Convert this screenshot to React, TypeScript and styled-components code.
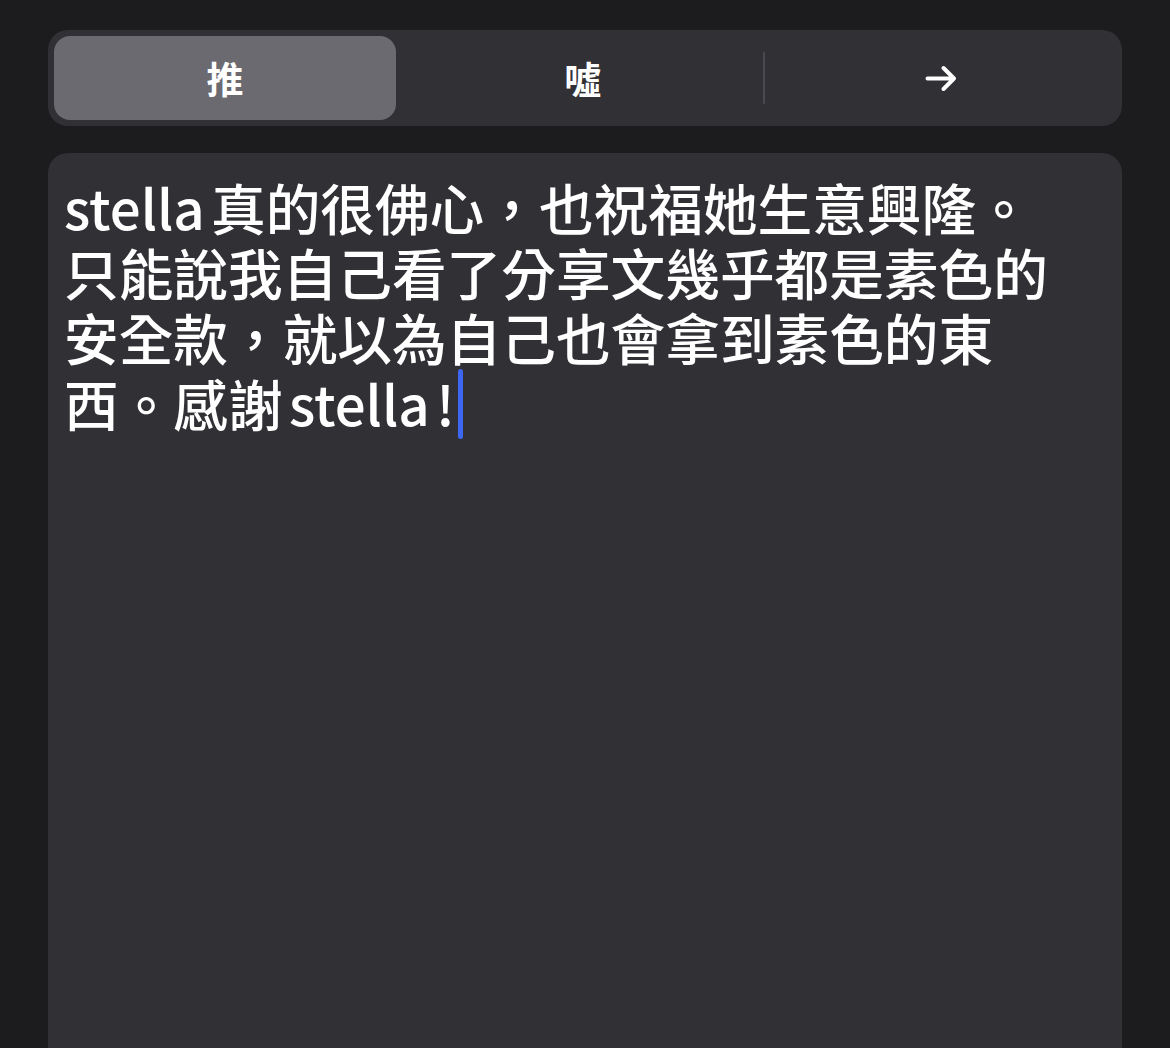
import React from "react";
import styled, { createGlobalStyle } from "styled-components";

const Global = createGlobalStyle`
  html, body {
    margin: 0;
    padding: 0;
    background: #1c1c1e;
    overflow: hidden;
  }
  body {
    font-family: "Noto Sans CJK TC", "Noto Sans", sans-serif;
  }
`;

const Page = styled.div`
  display: flex;
  flex-direction: column;
  gap: 27px;
  padding: 30px 48px 0 48px;
  height: 1048px;
  box-sizing: border-box;
`;

const Segmented = styled.div`
  display: grid;
  grid-template-columns: 342px 367px 2px 1fr;
  align-items: center;
  height: 96px;
  padding: 6px;
  box-sizing: border-box;
  border-radius: 20px;
  background: #313035;
`;

const Segment = styled.div<{ $active?: boolean; $nudge?: number }>`
  height: 84px;
  display: flex;
  align-items: center;
  justify-content: center;
  padding-left: ${(p) => p.$nudge ?? 0}px;
  border-radius: 16px;
  background: ${(p) => (p.$active ? "#6b6a70" : "transparent")};
  color: #ffffff;
  font-family: "Noto Sans CJK TC", sans-serif;
  font-weight: 600;
  font-size: 37px;
  line-height: 1;
`;

const Divider = styled.div`
  width: 2px;
  height: 52px;
  border-radius: 1px;
  background: #4a494f;
`;

const Card = styled.div`
  flex: 1;
  background: #313035;
  border-radius: 20px 20px 0 0;
  padding: 21px 16px 0 16px;
  box-sizing: border-box;
`;

const Body = styled.div`
  color: #ffffff;
  font-family: "Noto Sans CJK TC", sans-serif;
  font-weight: 500;
  font-size: 54.67px;
  line-height: 65px;
  word-spacing: -6px;
  white-space: nowrap;
`;

const Caret = styled.span`
  display: inline-block;
  width: 5px;
  height: 70px;
  margin-left: 3px;
  border-radius: 3px;
  background: #3d66f2;
  vertical-align: -13px;
`;

const Arrow = () => (
  <svg width="32" height="27" viewBox="0 0 32 27" fill="none">
    <path
      d="M2.5 13.5H29M18.5 3l10.5 10.5-10.5 10.5"
      stroke="#ffffff"
      strokeWidth="4"
      strokeLinecap="round"
      strokeLinejoin="round"
    />
  </svg>
);

export default function App() {
  return (
    <>
      <Global />
      <Page>
        <Segmented>
          <Segment $active>推</Segment>
          <Segment $nudge={7}>噓</Segment>
          <Divider />
          <Segment>
            <Arrow />
          </Segment>
        </Segmented>
        <Card>
          <Body>
            stella 真的很佛心，也祝福她生意興隆。
            <br />
            只能說我自己看了分享文幾乎都是素色的
            <br />
            安全款，就以為自己也會拿到素色的東
            <br />
            西。感謝 stella !
            <Caret />
          </Body>
        </Card>
      </Page>
    </>
  );
}
